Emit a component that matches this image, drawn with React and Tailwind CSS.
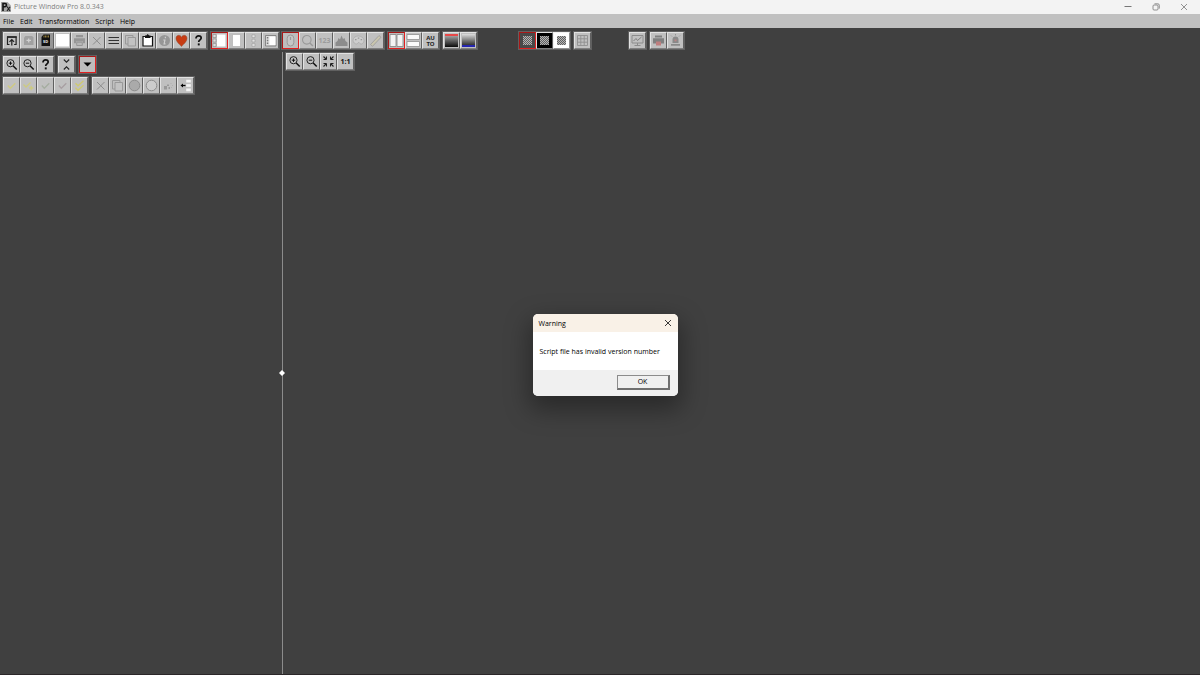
import React, { useState } from 'react';
import clsx from 'clsx';

const Svg = ({ children }) => (
  <svg viewBox="0 0 15 15" className="w-[15px] h-[15px] block" fill="none" aria-hidden="true">
    {children}
  </svg>
);

const OpenIcon = () => (
  <Svg>
    <path d="M5.5 11.5h-2V4h8.6v7.5h-2" stroke="#222" strokeWidth="1.2" />
    <path d="M3 4h9.7" stroke="#222" strokeWidth="1.6" />
    <path d="M7.8 12.5V7M5.5 8.8l2.3-2.3 2.3 2.3" stroke="#222" strokeWidth="1.2" />
  </Svg>
);

const SaveIcon = () => (
  <Svg>
    <path d="M3 4.5 4.5 3h6.6l1.4 1.5V12H3z" fill="#a0a0a0" />
    <path d="M7.7 5.5v4M5.5 7.4h4.5" stroke="#d0d0d0" strokeWidth="1.3" />
  </Svg>
);

const SdIcon = () => (
  <Svg>
    <path d="M0 0h15v15H0z" fill="#969696" />
    <path d="M5.5 1.5H12V13H3.5V4z" fill="#111" />
    <path d="M6 2.5v2M7.5 2.5v2M9 2.5v2M10.5 2.5v2" stroke="#c9a94c" strokeWidth="0.7" />
    <text x="7.7" y="9.5" fontSize="4" fontWeight="700" textAnchor="middle" fill="#eee">SD</text>
  </Svg>
);

const BlankIcon = () => (
  <Svg>
    <path d="M1 1h13v12.5H1z" fill="#fff" />
  </Svg>
);

const PrintIcon = () => (
  <Svg>
    <path d="M4 2h7v2.2H4zM2 5.2h11v5h-2V8.6H4v1.6H2z" fill="#969696" />
    <path d="M4.7 9.2h5.6v3.3H4.7z" fill="#b8b8b8" stroke="#969696" />
  </Svg>
);

const CrossIcon = () => (
  <Svg>
    <path d="m4 4 7.5 7.5M11.5 4 4 11.5" stroke="#8e8e8e" />
  </Svg>
);

const LinesIcon = () => (
  <Svg>
    <path d="M2.5 4.5H13M2.5 7.5H13M2.5 10.5H13" stroke="#333" strokeWidth="1.2" />
  </Svg>
);

const CopyIcon = () => (
  <Svg>
    <path d="M5 11H2.5V2.5H10v2" stroke="#999" />
    <path d="M5 4.5h7.5V13H5z" stroke="#999" fill="#c2c2c2" />
  </Svg>
);

const PasteIcon = () => (
  <Svg>
    <path d="M3 3.5h9.500V13H3z" fill="#fff" stroke="#111" strokeWidth="1.2" />
    <path d="M5 2.5h1.3L7.7 1l1.4 1.5h1.4V5H5z" fill="#111" />
  </Svg>
);

const InfoIcon = () => (
  <Svg>
    <circle cx="7.5" cy="7.5" r="5.5" fill="#969696" />
    <path d="M8.4 3.8v1.4M6.3 7h1.6l-.8 3.9h1.4" stroke="#d0d0d0" strokeWidth="1.2" />
  </Svg>
);

const HeartIcon = () => (
  <Svg>
    <path
      d="M7.5 13.5C4.8 10.5 2 8.5 2 5.3c0-1.8 1.3-3 2.8-3 1.2 0 2.2.8 2.7 1.9.5-1.1 1.5-1.9 2.7-1.9 1.5 0 2.8 1.2 2.8 3 0 3.2-2.8 5.2-5.5 8.2z"
      fill="#c63c14"
      stroke="#8c4a32"
      strokeWidth="0.5"
    />
  </Svg>
);

const HelpIcon = () => (
  <Svg>
    <path d="M5 5.4c0-1.7 1-2.5 2.6-2.5s2.6.8 2.6 2.1c0 1.9-2.5 1.9-2.5 4" stroke="#111" strokeWidth="1.7" />
    <path d="M6.8 10.4h1.9v2H6.8z" fill="#111" />
  </Svg>
);

const StripLeftIcon = () => (
  <Svg>
    <path d="M1 1.5h3v3H1zM1 6h3v3H1zM1 10.5h3v3H1z" fill="#ddd" stroke="#8a8a8a" strokeWidth="0.6" />
    <path d="M5 1.5h8.5v12H5z" fill="#fff" />
  </Svg>
);

const PageIcon = () => (
  <Svg>
    <path d="M3.5 1.5h8v12h-8z" fill="#fff" stroke="#aaa" strokeWidth="0.6" />
  </Svg>
);

const StripIcon = () => (
  <Svg>
    <path d="M6 1.8h3v2.8H6zM6 6.2h3V9H6zM6 10.6h3v2.8H6z" fill="#e2e2e2" stroke="#999" strokeWidth="0.6" />
  </Svg>
);

const FramedStripIcon = () => (
  <Svg>
    <path d="M2.5 2.5H13V13H2.5z" fill="#ddd" stroke="#808080" strokeWidth="0.9" />
    <path d="M6.5 3.5h6V12h-6z" fill="#fff" />
    <path d="M3.8 4h1.5v1.5H3.8zM3.8 6.8h1.5v1.5H3.8zM3.8 9.6h1.5v1.5H3.8z" fill="#777" />
  </Svg>
);

const MouseIcon = () => (
  <Svg>
    <rect x="4.2" y="2" width="6.6" height="11" rx="3.3" fill="#c6c6c6" stroke="#999" />
    <path d="M7.5 4v3" stroke="#999" strokeWidth="1.2" />
  </Svg>
);

const LoupeIcon = () => (
  <Svg>
    <circle cx="6.8" cy="6.8" r="4.3" stroke="#999" strokeWidth="1.1" />
    <path d="m9.9 9.9 3 3" stroke="#999" strokeWidth="1.4" />
  </Svg>
);

const CountIcon = () => (
  <Svg>
    <text x="7.5" y="10" fontSize="7" fontWeight="700" textAnchor="middle" fill="#9c9c9c">123</text>
  </Svg>
);

const HistogramIcon = () => (
  <Svg>
    <path d="M1.5 13V9.5L3.5 8l1-3L6 6.500 7.5 2.5 9 6l1.5-1 1 3 2 1.5V13z" fill="#8c8c8c" />
  </Svg>
);

const PaletteIcon = () => (
  <Svg>
    <path d="M7.5 3C4.5 3 2 4.8 2 7.2S4 11 5.5 11s1-1.5 2.2-1.5S9 11.5 10.5 11 13 9 13 7.2 10.5 3 7.5 3z" fill="#cdcdcd" stroke="#a2a2a2" strokeWidth="0.6" />
    <path d="M4 6h1.5v1.2H4zM6.8 4.5h1.5v1.2H6.8zM9.6 6h1.5v1.2H9.6z" fill="#999" />
  </Svg>
);

const RulerIcon = () => (
  <Svg>
    <path d="m2.5 11.5 8.5-9 2 1.8-8.5 9z" fill="#c9c5ae" stroke="#999" strokeWidth="0.8" />
  </Svg>
);

const SplitColumnsIcon = () => (
  <Svg>
    <path d="M1 1.5h6v12H1zM8 1.5h6v12H8z" fill="#f4f4f4" stroke="#8c8c8c" strokeWidth="0.9" />
  </Svg>
);

const SplitRowsIcon = () => (
  <Svg>
    <path d="M1 1.5h12.5v5H1zM1 8.5h12.5v5H1z" fill="#fafafa" stroke="#999" strokeWidth="0.9" />
  </Svg>
);

const AutoIcon = () => (
  <Svg>
    <text x="7.5" y="7" fontSize="6" fontWeight="700" textAnchor="middle" fill="#222">AU</text>
    <text x="7.5" y="13" fontSize="6" fontWeight="700" textAnchor="middle" fill="#222">TO</text>
  </Svg>
);

const HighlightIcon = () => (
  <Svg>
    <defs>
      <linearGradient id="highlight-ramp" x1="0" y1="0" x2="0" y2="1">
        <stop offset="0" stopColor="#bbb" />
        <stop offset="1" stopColor="#0a0a0a" />
      </linearGradient>
    </defs>
    <rect x="1" y="1" width="13" height="13" fill="url(#highlight-ramp)" />
    <rect x="1" y="1" width="13" height="2" fill="#e84848" />
  </Svg>
);

const ShadowIcon = () => (
  <Svg>
    <defs>
      <linearGradient id="shadow-ramp" x1="0" y1="0" x2="0" y2="1">
        <stop offset="0" stopColor="#ddd" />
        <stop offset="1" stopColor="#161616" />
      </linearGradient>
    </defs>
    <rect x="1" y="1" width="13" height="13" fill="url(#shadow-ramp)" />
    <rect x="1" y="12" width="13" height="2" fill="#2626b0" />
  </Svg>
);

const CheckerIcon = () => (
  <Svg>
    <defs>
      <pattern id="checker" width="2" height="2" patternUnits="userSpaceOnUse">
        <path d="M0 0h2v2H0z" fill="#606060" />
        <path d="M0 0h1v1H0zM1 1h1v1H1z" fill="#b4b4b4" />
      </pattern>
    </defs>
    <path d="M3 3h9v9H3z" fill="url(#checker)" />
  </Svg>
);

const GridIcon = () => (
  <Svg>
    <path d="M2.5 2.5h10v10h-10zM2.5 5.8h10M2.5 9.2h10M5.8 2.5v10M9.2 2.5v10" stroke="#8f8f8f" strokeWidth="0.9" />
  </Svg>
);

const MonitorIcon = () => (
  <Svg>
    <path d="M2 2.5h11V10H2zM7.5 10v2M4.5 12.5h6" stroke="#8c8c8c" />
    <path d="M3.5 8 6 5.5l1.5 2L11.5 4" stroke="#777" strokeWidth="0.9" />
  </Svg>
);

const SoftProofIcon = () => (
  <Svg>
    <path d="M4 2.5h7v2H4zM2 5.2h11v5.3H2z" fill="#808080" />
    <path d="M5 8.5h5v4H5z" fill="#bf7e7e" />
  </Svg>
);

const AlarmIcon = () => (
  <Svg>
    <path d="M4.5 10V6.5a3 3 0 0 1 6 0V10zM3 11h9v1.7H3z" fill="#8a8a8a" />
    <path d="M6.5 6.5h2v1.8h-2z" fill="#b98585" />
    <path d="M7.5 1v1.5M3 2.5l1 1M12 2.5l-1 1" stroke="#8a8a8a" strokeWidth="0.8" />
  </Svg>
);

const ZoomInIcon = () => (
  <Svg>
    <circle cx="6.5" cy="6.2" r="3.6" stroke="#222" />
    <path d="m9.2 9 3.5 3.5" stroke="#111" strokeWidth="1.5" />
    <path d="M6.5 4.5v3.4M4.8 6.2h3.4" stroke="#111" />
  </Svg>
);

const ZoomOutIcon = () => (
  <Svg>
    <circle cx="6.5" cy="6.2" r="3.6" stroke="#222" />
    <path d="m9.2 9 3.5 3.5" stroke="#111" strokeWidth="1.5" />
    <path d="M4.8 6.2h3.4" stroke="#111" />
  </Svg>
);

const CollapseIcon = () => (
  <Svg>
    <path d="m4.8 2.5 2.7 2.7 2.7-2.7M4.8 12.5l2.7-2.7 2.7 2.7" stroke="#222" strokeWidth="1.1" />
  </Svg>
);

const DropIcon = () => (
  <Svg>
    <path d="M3.5 5.5h8l-4 4z" fill="#000" />
  </Svg>
);

const CheckIcon = ({ stroke }) => (
  <Svg>
    <path d="m3.8 7.5 2.5 2.7 5-5" stroke={stroke} strokeWidth="1.3" />
  </Svg>
);

const CheckStepIcon = () => (
  <Svg>
    <path d="M2.5 6.5 5 9l4.5-4.5M8 10h4.5M10.2 7.8v4.4" stroke="#cdca80" strokeWidth="1.3" />
  </Svg>
);

const CheckDoubleIcon = () => (
  <Svg>
    <path d="M3.5 5.3 6 7.8l5.5-5M3.5 9.8 6 12.3l5.5-5" stroke="#cfca70" strokeWidth="1.3" />
  </Svg>
);

const DiscIcon = ({ fill = '#aaa' }) => (
  <Svg>
    <circle cx="7.5" cy="7.5" r="5.3" fill={fill} stroke="#8c8c8c" />
  </Svg>
);

const SprayIcon = () => (
  <Svg>
    <path d="M3 8h3v3.5H3zM7.5 9H9v2H7.500zM6 6.5h2V8H6z" fill="#999" />
    <path d="M9.5 5.5h1M11 7.5h1M10 9.5h1" stroke="#aaa" strokeWidth="0.8" />
  </Svg>
);

const InsertIcon = () => (
  <Svg>
    <path d="M8 1.5h5v3.2H8zM8 5.9h5v3.2H8zM8 10.3h5v3.2H8z" fill="#f4f4f4" stroke="#bbb" strokeWidth="0.4" />
    <path d="M4 7.5h3.5" stroke="#000" strokeWidth="1.3" />
    <path d="M2.5 7.5 5 5.5v4z" fill="#000" />
  </Svg>
);

const OneToOneIcon = () => (
  <Svg>
    <text x="7.5" y="10" fontSize="7" fontWeight="700" textAnchor="middle" fill="#111">1:1</text>
  </Svg>
);

const FitIcon = () => (
  <Svg>
    <path d="M2.5 2.5 5 5M12.5 2.5 10 5M2.5 12.5 5 10M12.5 12.5 10 10" stroke="#222" strokeWidth="1.1" />
    <path d="M5.5 2.5v3h-3M9.5 2.5v3h3M5.5 12.5v-3h-3M9.5 12.5v-3h3" stroke="#222" />
  </Svg>
);

const mainGroups = [
  {
    gap: 'ml-[3px]',
    tools: [
      ['Open', OpenIcon],
      ['Save', SaveIcon],
      ['Memory card', SdIcon],
      ['New image', BlankIcon],
      ['Print', PrintIcon],
      ['Delete', CrossIcon],
      ['List', LinesIcon],
      ['Copy', CopyIcon],
      ['Paste', PasteIcon],
      ['Info', InfoIcon],
      ['Favorites', HeartIcon],
      ['Help', HelpIcon],
    ],
  },
  {
    gap: 'ml-1',
    tools: [
      ['Tree and image', StripLeftIcon, 'active'],
      ['Image only', PageIcon],
      ['Tree only', StripIcon],
      ['Floating tree', FramedStripIcon],
    ],
  },
  {
    gap: 'ml-[3px]',
    tools: [
      ['Pointer', MouseIcon, 'active'],
      ['Magnifier', LoupeIcon],
      ['Readout', CountIcon],
      ['Histogram', HistogramIcon],
      ['Palette', PaletteIcon],
      ['Measure', RulerIcon],
    ],
  },
  {
    gap: 'ml-1',
    tools: [
      ['Side by side', SplitColumnsIcon, 'active'],
      ['Stacked', SplitRowsIcon],
      ['Auto layout', AutoIcon],
    ],
  },
  {
    gap: 'ml-1',
    tools: [
      ['Highlight clipping', HighlightIcon],
      ['Shadow clipping', ShadowIcon],
    ],
  },
  {
    gap: 'ml-[42px]',
    tools: [
      ['Gray background', CheckerIcon, 'gray'],
      ['Black background', CheckerIcon, 'black'],
      ['White background', CheckerIcon, 'white'],
    ],
  },
  { gap: 'ml-1', tools: [['Grid', GridIcon]] },
  { gap: 'ml-[38px]', tools: [['Monitor profile', MonitorIcon]] },
  {
    gap: 'ml-1',
    tools: [
      ['Soft proof', SoftProofIcon],
      ['Gamut alarm', AlarmIcon],
    ],
  },
];

const treeGroups = [
  {
    gap: 'ml-[3px]',
    tools: [
      ['Zoom tree in', ZoomInIcon],
      ['Zoom tree out', ZoomOutIcon],
      ['Tree help', HelpIcon],
    ],
  },
  { gap: 'ml-1', tools: [['Collapse', CollapseIcon]] },
  { gap: 'ml-1', tools: [['Expand toolbar', DropIcon, 'active']] },
];

const editGroups = [
  {
    gap: 'ml-[3px]',
    tools: [
      ['Apply', () => <CheckIcon stroke="#cfca80" />],
      ['Apply and add', CheckStepIcon],
      ['Accept', () => <CheckIcon stroke="#a5ada0" />],
      ['Keep', () => <CheckIcon stroke="#a89fa2" />],
      ['Apply all', CheckDoubleIcon],
    ],
  },
  {
    gap: 'ml-1',
    tools: [
      ['Remove', CrossIcon],
      ['Duplicate', CopyIcon],
      ['Mask', DiscIcon],
      ['Clear mask', () => <DiscIcon fill="#ccc" />],
      ['Spray', SprayIcon],
      ['Insert', InsertIcon],
    ],
  },
];

const viewGroups = [
  {
    gap: 'ml-[3px]',
    tools: [
      ['Zoom in', ZoomInIcon],
      ['Zoom out', ZoomOutIcon],
      ['Fit', FitIcon],
      ['Actual size', OneToOneIcon],
    ],
  },
];

const faces = {
  normal: 'bg-[#c0c0c0] border-t-[#e2e2e2] border-l-[#e2e2e2] border-r-[#606060] border-b-[#808080]',
  active: 'bg-[#bdbdbd] border-t-[#a81818] border-l-[#a81818] border-r-[#e02020] border-b-[#e02020]',
  gray: 'bg-[#484848] border-t-[#a81818] border-l-[#a81818] border-r-[#e02020] border-b-[#e02020]',
  black: 'bg-black border-t-[#e2e2e2] border-l-[#e2e2e2] border-r-[#606060] border-b-[#808080]',
  white: 'bg-white border-t-[#f2f2f2] border-l-[#f2f2f2] border-r-[#909090] border-b-[#909090]',
};

const ToolRow = ({ groups, label, className }) => (
  <div role="toolbar" aria-label={label} className={clsx('flex', className)}>
    {groups.map((group, i) => (
      <div key={i} className={clsx('flex outline outline-[#606060]', group.gap)}>
        {group.tools.map(([name, Icon, face = 'normal']) => (
          <button key={name} type="button" aria-label={name} title={name} className={clsx('size-[17px] border', faces[face])}>
            <Icon />
          </button>
        ))}
      </div>
    ))}
  </div>
);

const AppLogo = () => (
  <svg viewBox="0 0 10 10" className="w-[10px] h-[10px]" fill="none" aria-hidden="true">
    <path d="M0 0h6.5L10 3.5V10H0z" fill="#a5a5a5" />
    <path d="M2 9V1.5h2c2 0 2 3.2 0 3.2H2" stroke="#111" strokeWidth="1.6" />
    <path d="M6 4.5 9 9M9 4.8 6 9" stroke="#222" strokeWidth="1.2" />
  </svg>
);

const TitleBar = () => (
  <header className="flex items-center h-[14px] bg-[#f3f3f3] pl-px pr-[2px] text-[7px] leading-[14px] text-[#808080]">
    <AppLogo />
    <h1 className="ml-[3px] flex-1">Picture Window Pro 8.0.343</h1>
    <button type="button" aria-label="Minimize" className="w-7 flex justify-center">
      <svg viewBox="0 0 8 8" className="size-2" fill="none" stroke="#777"><path d="M.5 3.5h7" /></svg>
    </button>
    <button type="button" aria-label="Restore" className="w-7 flex justify-center">
      <svg viewBox="0 0 8 8" className="size-2" fill="none" stroke="#777" strokeWidth="0.8">
        <rect x="1" y="2" width="5" height="5" rx="1" />
        <path d="M2.5.8h3.3a1.5 1.5 0 0 1 1.5 1.5v3.3" />
      </svg>
    </button>
    <button type="button" aria-label="Close" className="w-7 flex justify-center">
      <svg viewBox="0 0 8 8" className="size-2" fill="none" stroke="#777" strokeWidth="0.8"><path d="m1 1 6 6M7 1 1 7" /></svg>
    </button>
  </header>
);

const MenuBar = () => (
  <nav className="flex gap-[6px] h-[14px] bg-[#c0c0c0] pl-[3px] text-[7px] leading-[16px] text-black">
    {['File', 'Edit', 'Transformation', 'Script', 'Help'].map(item => (
      <button key={item} type="button" className="h-[14px]">{item}</button>
    ))}
  </nav>
);

const WarningDialog = ({ onClose }) => (
  <div className="absolute inset-0 flex items-center justify-center pl-[10px] pt-[35px]">
    <div
      role="alertdialog"
      aria-labelledby="warning-title"
      aria-describedby="warning-text"
      className="w-[145px] rounded-[5px] overflow-hidden bg-white text-[7px] text-black shadow-[0_10px_24px_4px_rgba(0,0,0,0.35)]"
    >
      <div className="flex items-center justify-between h-[18px] bg-[#f9f1e7] px-[6px]">
        <h2 id="warning-title" className="leading-[14px] pt-[2px]">Warning</h2>
        <button type="button" aria-label="Close warning" onClick={onClose}>
          <svg viewBox="0 0 8 8" className="size-2 block" fill="none" stroke="#222" strokeWidth="0.9"><path d="m1 1 6 6M7 1 1 7" /></svg>
        </button>
      </div>
      <p id="warning-text" className="h-[38px] leading-[40px] pl-[7px] whitespace-nowrap">Script file has invalid version number</p>
      <div className="flex items-center justify-end h-[26px] bg-[#f0f0f0] pr-2">
        <button
          type="button"
          onClick={onClose}
          className="w-[53px] h-[15px] leading-[12px] border border-t-[#8c8c8c] border-l-[#8c8c8c] border-r-2 border-b-2 border-r-[#707070] border-b-[#707070]"
        >
          OK
        </button>
      </div>
    </div>
  </div>
);

export default function App() {
  const [showWarning, setShowWarning] = useState(true);

  return (
    <div className="relative min-h-screen flex flex-col bg-[#404040] border-b border-[#2b2729] font-['Open_Sans','Noto_Sans',sans-serif] select-none">
      <TitleBar />
      <MenuBar />
      <ToolRow groups={mainGroups} label="Main" className="pt-1 pb-[3px]" />

      <main className="flex flex-1">
        <section className="relative w-[283px] shrink-0 flex flex-col gap-1 pt-1 border-r border-[#8c8c8c]">
          <ToolRow groups={treeGroups} label="Image tree" />
          <ToolRow groups={editGroups} label="Edit" />
          {/* splitter handle */}
          <svg viewBox="0 0 6 6" className="absolute size-[6px] -right-[3px] top-[318px]" aria-hidden="true">
            <path d="M3 0l3 3-3 3-3-3z" fill="#fff" />
          </svg>
        </section>
        <section className="flex-1 pt-px">
          <ToolRow groups={viewGroups} label="View" />
        </section>
      </main>

      {showWarning && <WarningDialog onClose={() => setShowWarning(false)} />}
    </div>
  );
}
